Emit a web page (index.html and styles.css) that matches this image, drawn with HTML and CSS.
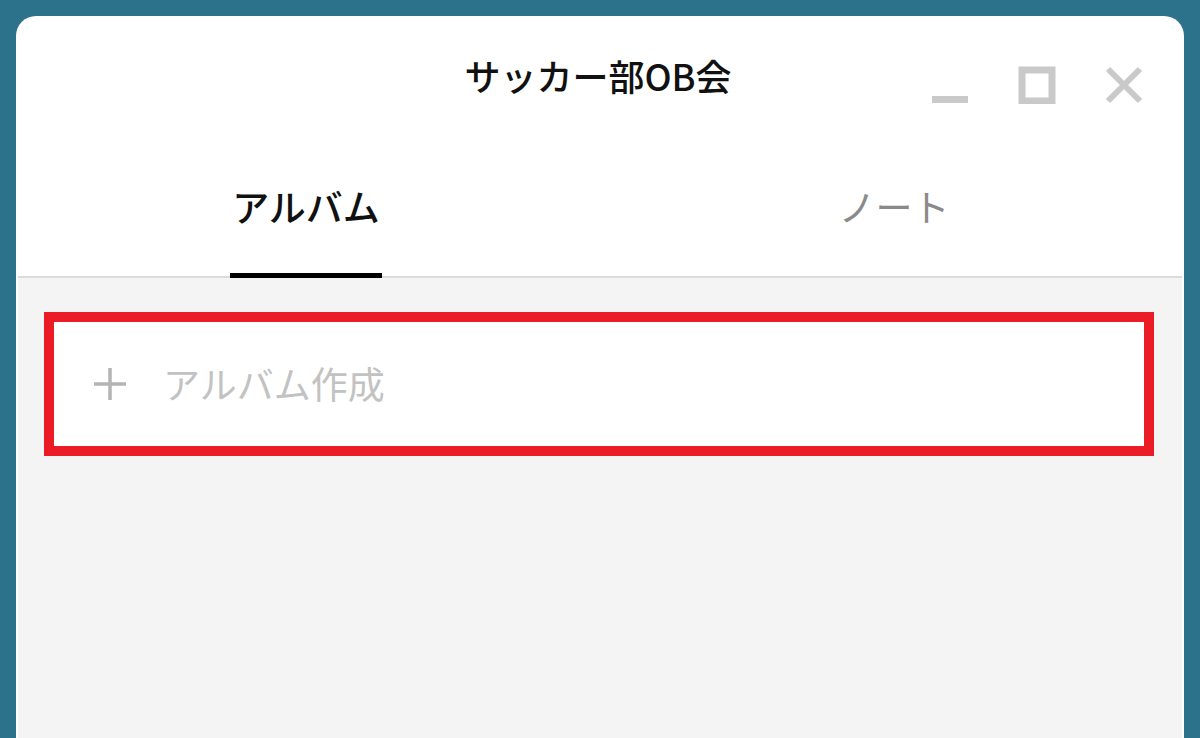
FILE: index.html
```html
<!DOCTYPE html>
<html lang="ja">
<head>
  <meta charset="UTF-8" />
  <meta name="viewport" content="width=device-width, initial-scale=1.0"/>
  <title>サッカー部OB会</title>
  <link rel="stylesheet" href="styles.css">
</head>
<body>
  <div class="window">
    <div class="titlebar">
      <div></div>
      <div class="title">サッカー部OB会</div>
      <div class="controls">
        <svg class="ctrl" width="38" height="38" viewBox="0 0 38 38">
          <rect x="1" y="30" width="36" height="7" fill="#c9c9c9"/>
        </svg>
        <svg class="ctrl" width="38" height="38" viewBox="0 0 38 38">
          <rect x="4" y="4" width="30" height="31" fill="none" stroke="#c9c9c9" stroke-width="7"/>
        </svg>
        <svg class="ctrl" width="38" height="38" viewBox="0 0 38 38">
          <path d="M3 3 L35 35 M35 3 L3 35" stroke="#c9c9c9" stroke-width="6"/>
        </svg>
      </div>
    </div>

    <div class="tabs">
      <div class="tab active"><span>アルバム</span></div>
      <div class="tab"><span>ノート</span></div>
    </div>

    <div class="content">
      <div class="create-album">
        <svg class="plus" width="34" height="34" viewBox="0 0 34 34">
          <path d="M17 1 V33 M1 17 H33" stroke="#b4b4b4" stroke-width="3.5"/>
        </svg>
        <span class="create-label">アルバム作成</span>
      </div>
    </div>
  </div>
</body>
</html>
```

FILE: styles.css
```css
:root {
  --desk-bg: #2b728a;
  --line: #dcdcdc;
  --soft-bg: #f4f4f4;
  --icon-gray: #c9c9c9;
  --red: #ec1c26;
}

html, body {
  height: 100%;
}

body {
  margin: 0;
  padding: 16px 16px 0 16px;
  box-sizing: border-box;
  background: var(--desk-bg);
  font-family: "Noto Sans CJK JP", "Noto Sans", sans-serif;
  overflow: hidden;
}

.window {
  background: #fff;
  border-radius: 20px 20px 0 0;
  height: 100%;
  padding: 0 2px;
  display: flex;
  flex-direction: column;
}

.titlebar {
  display: grid;
  grid-template-columns: 1fr auto 1fr;
  align-items: center;
  height: 124px;
}

.title {
  font-size: 36px;
  font-weight: 500;
  color: #111;
  padding-bottom: 6px;
  margin-left: -4px;
}

.controls {
  display: flex;
  justify-content: flex-end;
  gap: 49px;
  padding-right: 39px;
  padding-top: 14px;
}

.ctrl {
  display: block;
}

.tabs {
  display: flex;
  border-bottom: 2px solid var(--line);
  height: 136px;
}

.tab {
  flex: 1;
  display: flex;
  justify-content: center;
  align-items: flex-end;
  font-size: 37px;
  color: #8a8a8a;
}

.tab span {
  display: block;
  padding-bottom: 40px;
  border-bottom: 8px solid transparent;
  margin-bottom: -5px;
  line-height: 1.4;
}

.tab.active {
  color: #111;
  font-weight: 500;
  padding-right: 12px;
}

.tab.active span {
  border-bottom-color: #000;
  padding-left: 2px;
  padding-right: 2px;
}

.content {
  flex: 1;
  background: var(--soft-bg);
  padding: 34px 28px 0 26px;
}

.create-album {
  height: 124px;
  border: 10px solid var(--red);
  background: #fff;
  display: flex;
  align-items: center;
  padding-left: 39px;
  gap: 36px;
}

.plus {
  display: block;
}

.create-label {
  font-size: 37px;
  color: #c2c2c2;
  padding-bottom: 2px;
}
```
